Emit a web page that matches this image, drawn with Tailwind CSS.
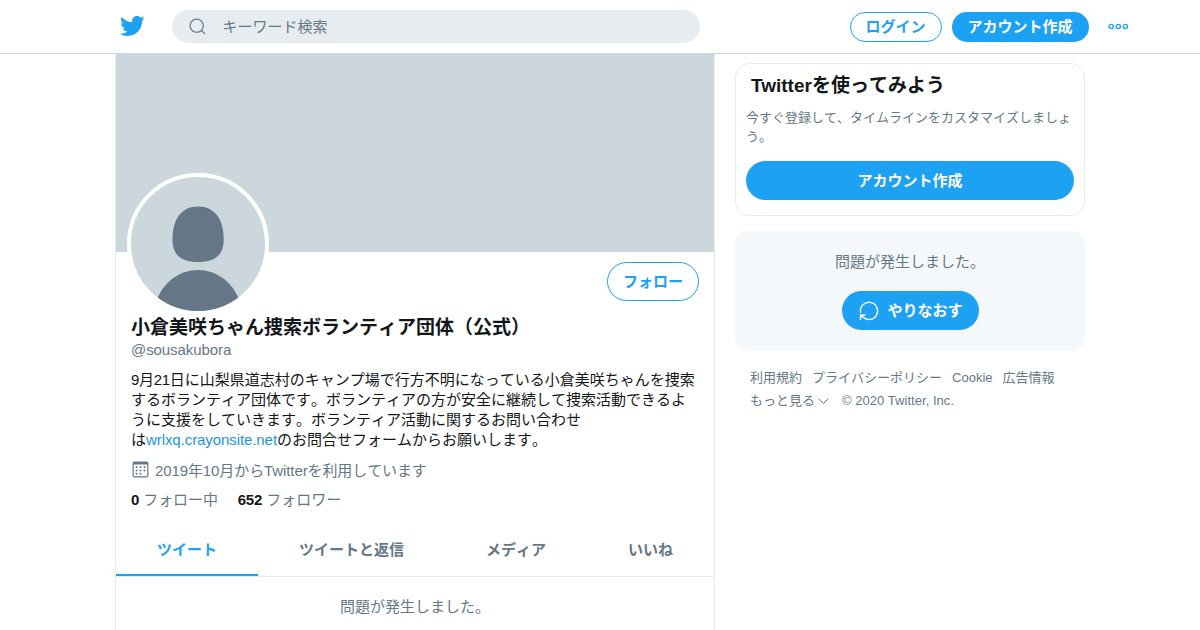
<!DOCTYPE html>
<html lang="ja">
<head>
  <meta charset="UTF-8"/>
  <meta name="viewport" content="width=device-width, initial-scale=1.0"/>
  <title>小倉美咲ちゃん捜索ボランティア団体（公式）</title>
  <script src="https://cdn.jsdelivr.net/npm/@tailwindcss/browser@4"></script>
  <style>
    body {
      font-family: "Liberation Sans", "Noto Sans CJK JP", sans-serif;
      font-kerning: none;
    }

    .latin {
      font-kerning: normal;
    }
  </style>
</head>
<body class="h-screen overflow-hidden bg-white text-[15px] leading-5 text-[#14171a]">

  <!-- Header -->
  <header class="h-[54px] border-b border-[#ccd6dd]">
    <div class="mx-auto flex h-full w-[1081px] items-center pr-[12px] pl-[60px]">
      <a href="#" class="-mt-px -ml-px flex w-[53px] shrink-0">
        <svg class="size-[26px]" viewBox="0 0 24 24" fill="#1da1f2"><path d="M23.643 4.937c-.835.37-1.732.62-2.675.733.962-.576 1.7-1.49 2.048-2.578-.9.534-1.897.922-2.958 1.13-.85-.904-2.06-1.47-3.4-1.47-2.572 0-4.658 2.086-4.658 4.66 0 .364.042.718.12 1.06-3.873-.195-7.304-2.05-9.602-4.868-.4.69-.63 1.49-.63 2.342 0 1.616.823 3.043 2.072 3.878-.764-.025-1.482-.234-2.11-.583v.06c0 2.257 1.605 4.14 3.737 4.568-.392.106-.803.162-1.227.162-.3 0-.593-.028-.877-.082.593 1.85 2.313 3.198 4.352 3.234-1.595 1.25-3.604 1.995-5.786 1.995-.376 0-.747-.022-1.112-.065 2.062 1.323 4.51 2.093 7.14 2.093 8.57 0 13.255-7.098 13.255-13.254 0-.2-.005-.402-.014-.602.91-.658 1.7-1.477 2.323-2.41z"/></svg>
      </a>
      <div class="flex h-[33px] w-[528px] shrink-0 items-center rounded-full bg-[#e6ecf0] pl-4 text-[#657786]">
        <svg class="size-[19px]" viewBox="0 0 24 24" fill="currentColor"><path d="M21.53 20.47l-3.66-3.66C19.195 15.24 20 13.214 20 11c0-4.97-4.03-9-9-9s-9 4.03-9 9 4.03 9 9 9c2.215 0 4.24-.804 5.808-2.13l3.66 3.66c.147.146.34.22.53.22s.385-.073.53-.22c.295-.293.295-.767.002-1.06zM3.5 11c0-4.135 3.365-7.5 7.5-7.5s7.5 3.365 7.5 7.5-3.365 7.5-7.5 7.5-7.5-3.365-7.5-7.5z"/></svg>
        <span class="ml-4">キーワード検索</span>
      </div>
      <a href="#" class="ml-auto flex h-[30px] w-[92px] shrink-0 items-center justify-center rounded-full border border-[#1da1f2] font-bold text-[#1da1f2]">ログイン</a>
      <a href="#" class="ml-2.5 flex h-[30px] w-[137px] shrink-0 items-center justify-center rounded-full bg-[#1da1f2] font-bold text-white">アカウント作成</a>
      <svg class="ml-[19px] h-[7px] w-[21px] shrink-0" viewBox="0 0 21 7" fill="none" stroke="#1da1f2" stroke-width="1.4"><circle cx="3.2" cy="3.5" r="2.1"/><circle cx="10.3" cy="3.5" r="2.1"/><circle cx="17.4" cy="3.5" r="2.1"/></svg>
    </div>
  </header>

  <div class="mx-auto flex w-[970px] items-start gap-5">

    <!-- Profile -->
    <main class="h-[576px] w-[600px] border-x border-[#e6ecf0]">
      <div class="h-[198px] bg-[#ccd6dd]"></div>
      <div class="h-[264px] px-[15px]">
        <div class="flex h-[63px] items-start justify-between pt-2.5">
          <div class="-mt-[89px] -ml-1 size-[142px] overflow-hidden rounded-full border-4 border-white bg-[#ccd6dd]">
            <svg class="size-[134px]" viewBox="0 0 134 134" fill="#657786">
              <path d="M67 29.500c17 0 25.700 13 25.700 33C92.700 78 84 85 67 85S41.500 78 41.500 62.500c0-20 8.500-33 25.500-33z"/>
              <path d="M67 93c18 0 33 11 40.500 28v13h-81v-13C34 104 49 93 67 93z"/>
            </svg>
          </div>
          <a href="#" class="flex h-[39px] w-[92px] items-center justify-center rounded-full border border-[#1da1f2] font-bold text-[#1da1f2]">フォロー</a>
        </div>
        <h1 class="text-[19px] leading-[25px] font-bold">小倉美咲ちゃん捜索ボランティア団体（公式）</h1>
        <p class="tracking-[-0.08px] text-[#657786]">@sousakubora</p>
        <p class="mt-2.5 whitespace-nowrap"><span class="tracking-[-0.3px]">9月21</span>日に山梨県道志村のキャンプ場で行方不明になっている小倉美咲ちゃんを捜索<br>するボランティア団体です。ボランティアの方が安全に継続して捜索活動できるよ<br>うに支援をしていきます。ボランティア活動に関するお問い合わせ<br>は<a href="#" class="tracking-[-0.08px] text-[#1b95e0]">wrlxq.crayonsite.net</a>のお問合せフォームからお願いします。</p>
        <div class="mt-[11px] flex items-center text-[#657786]">
          <svg class="-mt-[3px] mr-1 -ml-px size-[21px] p-px" viewBox="0 0 24 24" fill="currentColor"><path d="M19.708 2H4.292C3.028 2 2 3.028 2 4.292v15.416C2 20.972 3.028 22 4.292 22h15.416C20.972 22 22 20.972 22 19.708V4.292C22 3.028 20.972 2 19.708 2zm.792 17.708c0 .437-.355.792-.792.792H4.292c-.437 0-.792-.355-.792-.792V6.418c0-.437.354-.790.790-.792h15.420c.436 0 .790.355.790.792V19.710z"/><circle cx="7.032" cy="8.750" r="1.285"/><circle cx="7.032" cy="13.156" r="1.285"/><circle cx="16.968" cy="8.750" r="1.285"/><circle cx="16.968" cy="13.156" r="1.285"/><circle cx="12" cy="8.750" r="1.285"/><circle cx="12" cy="13.156" r="1.285"/><circle cx="7.032" cy="17.486" r="1.285"/><circle cx="12" cy="17.486" r="1.285"/></svg>
          <span class="tracking-[-0.1px]">2019年10月から<span class="latin">Twitter</span>を利用しています</span>
        </div>
        <div class="mt-[9px] flex gap-5 text-[#657786]">
          <a href="#" class="tracking-[-0.1px]"><b class="text-[#14171a]">0</b> フォロー中</a>
          <a href="#"><b class="tracking-[-0.3px] text-[#14171a]">652</b> フォロワー</a>
        </div>
      </div>

      <!-- Tabs -->
      <nav class="flex h-[61px] border-b border-[#e6ecf0] font-bold whitespace-nowrap text-[#657786]">
        <a href="#" class="border-b-2 border-[#1da1f2] px-[41px] pt-6 text-[#1da1f2]">ツイート</a>
        <a href="#" class="px-[41px] pt-6">ツイートと返信</a>
        <a href="#" class="px-[41px] pt-6">メディア</a>
        <a href="#" class="pt-6 pl-[41px]">いいね</a>
      </nav>
      <p class="mt-5 text-center text-[#657786]">問題が発生しました。</p>
    </main>

    <!-- Sidebar -->
    <aside class="w-[350px] pt-[9px]">
      <section class="h-[153px] rounded-[14px] border border-[#e6ecf0] px-2.5 pt-[9px]">
        <h2 class="pl-[5px] text-[19px] leading-[25px] font-bold"><span class="latin">Twitter</span>を使ってみよう</h2>
        <p class="mt-2.5 text-[13px] leading-[19px] text-[#657786]">今すぐ登録して、タイムラインをカスタマイズしましょ<br>う。</p>
        <a href="#" class="mt-[15px] flex h-[39px] items-center justify-center rounded-full bg-[#1da1f2] font-bold text-white">アカウント作成</a>
      </section>

      <section class="mt-[15px] flex h-[120px] flex-col items-center rounded-[14px] bg-[#f5f8fa] pt-[21px]">
        <p class="text-[#657786]">問題が発生しました。</p>
        <button class="mt-[19px] flex h-[39px] w-[137px] items-center justify-center gap-[7px] rounded-full bg-[#1da1f2] pl-px font-bold text-white">
          <svg class="size-[22px]" viewBox="0 0 22 22" fill="none" stroke="currentColor" stroke-width="1.4" stroke-linecap="round" stroke-linejoin="round"><path d="M2.500 12.300A8.600 8.600 0 1 1 5 17.100L2.500 15M2.500 19.500V15h4.500"/></svg>
          <span>やりなおす</span>
        </button>
      </section>

      <footer class="mt-[15px] flex flex-wrap gap-x-2.5 px-[15px] text-[13px] leading-[23px] text-[#657786]">
        <a href="#">利用規約</a>
        <a href="#">プライバシーポリシー</a>
        <a href="#">Cookie</a>
        <a href="#">広告情報</a>
        <a href="#" class="flex items-center">もっと見る
          <svg class="mt-0.5 ml-[3px] h-[7px] w-[11px]" viewBox="0 0 11 7" fill="none" stroke="currentColor" stroke-linecap="round" stroke-linejoin="round"><path d="M1 1l4.500 4.500L10 1"/></svg>
        </a>
        <span class="latin ml-[3px] tracking-[0.04px]">© 2020 Twitter, Inc.</span>
      </footer>
    </aside>
  </div>
</body>
</html>
